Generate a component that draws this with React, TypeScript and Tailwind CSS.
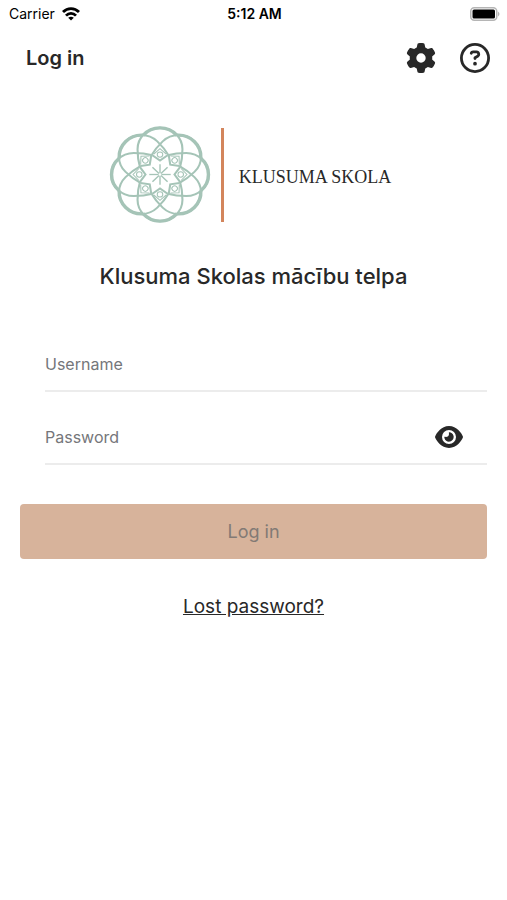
import { useState } from 'react';
import { FaEye, FaGear, FaRegCircleQuestion } from 'react-icons/fa6';

const PETALS = [0, 45, 90, 135, 180, 225, 270, 315];

// Eight overlapping petals around a small star
const Mandala = () => (
    <svg viewBox="-153 -146 306 292" className="h-[97px] w-[102px]" fill="none" stroke="#a5c4b7" aria-hidden="true">
        <g transform="scale(1.04 1)">
            {PETALS.map(angle => (
                <g key={angle} transform={`rotate(${angle})`}>
                    <path d="M-49 -118 A65 65 0 0 1 49 -118" strokeWidth="10" />
                    <path d="M-58 -22 C-62 -36 -65 -60 -65 -76 A65 65 0 0 1 65 -76 C65 -60 62 -36 58 -22" strokeWidth="6" />
                    <path d="M-22 -58 L0 -42 L22 -58" strokeWidth="6" />
                    <path d="M-18 -61 L0 -78 L18 -61" strokeWidth="3" />
                    <circle cy="-60" r="8" strokeWidth="3" />
                    <path d="M0 -4 V-31" strokeWidth="4" />
                </g>
            ))}
        </g>
    </svg>
);

const WifiIcon = () => (
    <svg viewBox="0 0 18 14" className="h-[14px] w-[18px]" aria-hidden="true">
        <g fill="none" stroke="#000" strokeWidth="2.8">
            <path d="M1 5 C5.500 0.400 12.500 0.400 17 5" />
            <path d="M4 8.600 C6.800 5.700 11.200 5.700 14 8.600" />
        </g>
        <path d="M6.200 10.800 Q9 8.500 11.800 10.800 L9 13.600 Z" />
    </svg>
);

const BatteryIcon = () => (
    <svg viewBox="0 0 30 14" className="h-[14px] w-[30px]" aria-hidden="true">
        <rect x="0.75" y="0.75" width="26" height="12.500" rx="3.500" fill="#fff" stroke="#b5b5b5" strokeWidth="1.500" />
        <rect x="2.500" y="2.500" width="22.500" height="9" rx="1.500" />
        <path d="M28 4.500 Q31 7 28 9.500 Z" fill="#b5b5b5" />
    </svg>
);

const StatusBar = () => (
    <div className="grid grid-cols-3 items-center pt-1 pr-[7px] pl-[9px] text-[14px] leading-5 text-black">
        <div className="flex items-center gap-[7px]">
            <span>Carrier</span>
            <WifiIcon />
        </div>
        <span className="text-center font-semibold">5:12 AM</span>
        <div className="flex justify-end">
            <BatteryIcon />
        </div>
    </div>
);

const App = () => {
    const [visible, setVisible] = useState(false);

    return (
        <div className="min-h-screen bg-white font-[Inter,sans-serif] text-[#282828]">
            <StatusBar />

            <header className="flex items-center justify-between pt-4 pr-[17px] pl-[26px]">
                <h1 className="text-[20px] leading-9 font-semibold">Log in</h1>
                <div className="flex gap-6 text-[30px]">
                    <button type="button" aria-label="Settings">
                        <FaGear />
                    </button>
                    <button type="button" aria-label="Help">
                        <FaRegCircleQuestion />
                    </button>
                </div>
            </header>

            <main className="px-5 pt-[50px]">
                {/* Site logo */}
                <div className="flex items-center justify-center pr-[7px]">
                    <Mandala />
                    <div className="mr-[15px] ml-[10px] h-[94px] w-[3px] bg-[#d3855c]" />
                    <span className="pt-1 font-['Liberation_Serif',serif] text-[18px] leading-6">KLUSUMA SKOLA</span>
                </div>

                <h2 className="mt-[37px] text-center text-[22px] leading-8 font-medium">Klusuma Skolas mācību telpa</h2>

                <form className="mt-[45px]" onSubmit={event => event.preventDefault()}>
                    <div className="ml-[25px] border-b-2 border-[#ececec]">
                        <input
                            type="text"
                            aria-label="Username"
                            placeholder="Username"
                            className="h-[53px] w-full text-[16px] outline-none placeholder:text-[#75767a]"
                        />
                    </div>
                    <div className="mt-[18px] ml-[25px] flex items-center border-b-2 border-[#ececec] pr-6">
                        <input
                            type={visible ? 'text' : 'password'}
                            aria-label="Password"
                            placeholder="Password"
                            className="h-[53px] min-w-0 flex-1 text-[16px] outline-none placeholder:text-[#75767a]"
                        />
                        <button type="button" aria-label="Show password" className="text-[28px]" onClick={() => setVisible(!visible)}>
                            <FaEye />
                        </button>
                    </div>
                    <button type="submit" disabled className="mt-[39px] h-[55px] w-full rounded bg-[#d7b39b] text-[18px] text-[#827a75]">
                        Log in
                    </button>
                </form>

                <div className="mt-8 text-center text-[19px] leading-8">
                    <a href="#lost-password" className="underline">Lost password?</a>
                </div>
            </main>
        </div>
    );
};

export default App;
